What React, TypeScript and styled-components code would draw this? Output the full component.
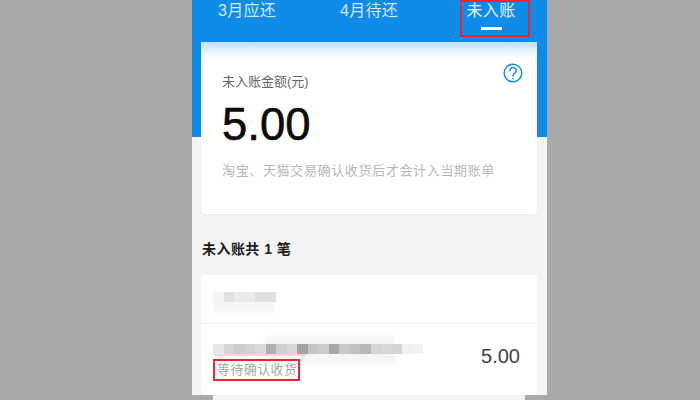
import styled, { createGlobalStyle } from "styled-components";

const GlobalStyle = createGlobalStyle`
  html, body {
    margin: 0;
    height: 100%;
    overflow: hidden;
    background: #aaaaaa;
  }
  body {
    font-family: "Liberation Sans", "Noto Sans CJK SC", sans-serif;
  }
`;

const Page = styled.div`
  width: 700px;
  height: 400px;
  overflow: hidden;
`;

const Phone = styled.div`
  width: 355px;
  height: 395px;
  margin-left: 192px;
  display: flex;
  flex-direction: column;
  background: linear-gradient(#0e8ce8 137px, #f4f4f4 137px);
`;

const BottomPeek = styled.div`
  width: 312px;
  height: 5px;
  margin-left: 213px;
  background: #f4f4f4;
`;

const Tabs = styled.div`
  display: grid;
  grid-template-columns: repeat(3, 122px);
  height: 42px;
  margin-left: -6px;
`;

const Tab = styled.div<{ $active?: boolean }>`
  position: relative;
  height: 36px;
  display: flex;
  flex-direction: column;
  align-items: center;
  font-size: 16px;
  line-height: 22px;
  letter-spacing: 0.3px;
  color: #d4eafb;

  ${(p) =>
    p.$active &&
    `
    color: #e8f4fd;
    &::after {
      content: "";
      position: absolute;
      left: 30px;
      top: 0;
      width: 70px;
      height: 37px;
      box-sizing: border-box;
      border: 2px solid #f0222c;
    }
  `}
`;

const Underline = styled.div`
  width: 21px;
  height: 3px;
  margin-top: 5px;
  background: #ffffff;
`;

const SummaryCard = styled.section`
  position: relative;
  width: 336px;
  height: 172px;
  box-sizing: border-box;
  margin-left: 9px;
  padding: 30px 21px 0;
  border-radius: 0 0 4px 4px;
  background: linear-gradient(#c4e0f7, #ffffff 16px);
  box-shadow: 0 1px 3px rgba(0, 0, 0, 0.04);
`;

const HelpIcon = styled.svg`
  position: absolute;
  top: 20px;
  right: 13px;
  width: 22px;
  height: 22px;
  fill: none;
  stroke: #1a8fe3;
  stroke-width: 1.7;
  stroke-linecap: round;
`;

const SummaryLabel = styled.div`
  font-size: 13px;
  line-height: 20px;
  color: #666666;
`;

const Amount = styled.div`
  margin-top: 5px;
  font-size: 45.5px;
  line-height: 56px;
  color: #0c0c0c;
  -webkit-text-stroke: 0.6px #0c0c0c;
`;

const Hint = styled.div`
  margin-top: 8px;
  font-size: 13px;
  line-height: 20px;
  letter-spacing: 0.65px;
  color: #b8b8b8;
  white-space: nowrap;
`;

const SectionTitle = styled.h2`
  margin: 25px 0 0 10px;
  height: 20px;
  font-size: 14px;
  line-height: 20px;
  font-weight: 700;
  letter-spacing: 0.45px;
  color: #1c1c1c;
`;

const ListCard = styled.section`
  width: 336px;
  height: 120px;
  margin: 16px 0 0 9px;
  border-radius: 4px;
  background: #ffffff;
  display: flex;
  flex-direction: column;
`;

const ShopRow = styled.div`
  height: 49px;
  box-sizing: border-box;
  padding: 17px 12px 0;
  border-bottom: 1px solid #efefef;
`;

const ItemRow = styled.div`
  flex: 1;
  display: flex;
  justify-content: space-between;
  padding: 20px 17px 0 12px;
`;

const ItemInfo = styled.div`
  display: flex;
  flex-direction: column;
  align-items: flex-start;
`;

const Mosaic = styled.div`
  position: relative;
  display: flex;
  height: 10px;
  filter: blur(0.4px);
`;

const MosaicCell = styled.i`
  display: block;
  width: 10.5px;
  height: 100%;
`;

const Smear = styled.div`
  position: absolute;
  background: #f6f6f6;
  border-radius: 3px;
  filter: blur(1.5px);
  z-index: -1;
`;

const ShopSmear = styled(Smear)`
  left: 0;
  top: 8px;
  width: 62px;
  height: 12px;
`;

const ItemSmear = styled(Smear)`
  left: 52px;
  top: -8px;
  width: 130px;
  height: 28px;
`;

const PinkStreak = styled.div`
  position: absolute;
  left: 1px;
  top: 10px;
  width: 92px;
  height: 2px;
  background: #fbd6d6;
  filter: blur(0.6px);
`;

const Status = styled.div`
  position: relative;
  z-index: 1;
  margin-top: 5px;
  width: 87px;
  height: 22px;
  box-sizing: border-box;
  border: 2px solid #f0222c;
  padding-left: 2px;
  font-size: 13px;
  line-height: 18px;
  letter-spacing: 0.4px;
  color: #a8a8a8;
  white-space: nowrap;
`;

const ItemAmount = styled.div`
  font-size: 20px;
  line-height: 24px;
  color: #444444;
`;

const shopCells = ["#f4f4f4", "#e2e2e2", "#ebebeb", "#ebebeb", "#e0e0e0", "#e0e0e0"];
const itemCells = [
  "#e8e8e8", "#d6d6d6", "#cdcdcd", "#d2d2d2", "#dadada", "#b0b0b0", "#cfcfcf",
  "#d8d8d8", "#a4a4a4", "#c4c4c4", "#cccccc", "#a8a8a8", "#c8c8c8", "#c0c0c0",
  "#b8b8b8", "#d4d4d4", "#d8d8d8", "#d4d4d4", "#f0f0f0", "#f2f2f2",
];

export default function App() {
  return (
    <Page>
      <GlobalStyle />
      <Phone>
        <Tabs>
          <Tab>3月应还</Tab>
          <Tab>4月待还</Tab>
          <Tab $active>
            未入账
            <Underline />
          </Tab>
        </Tabs>
        <SummaryCard>
          <HelpIcon viewBox="0 0 24 24">
            <circle cx="12" cy="12" r="9.6" />
            <path d="M8.6 9.4a3.4 3.4 0 1 1 5.4 2.8c-1.2.8-2 1.4-2 3" />
            <path d="M12 18.1v.1" />
          </HelpIcon>
          <SummaryLabel>未入账金额(元)</SummaryLabel>
          <Amount>5.00</Amount>
          <Hint>淘宝、天猫交易确认收货后才会计入当期账单</Hint>
        </SummaryCard>
        <SectionTitle>未入账共 1 笔</SectionTitle>
        <ListCard>
          <ShopRow>
            <Mosaic>
              <ShopSmear />
              {shopCells.map((c, i) => (
                <MosaicCell key={i} style={{ background: c }} />
              ))}
            </Mosaic>
          </ShopRow>
          <ItemRow>
            <ItemInfo>
              <Mosaic>
                <ItemSmear />
                {itemCells.map((c, i) => (
                  <MosaicCell key={i} style={{ background: c }} />
                ))}
                <PinkStreak />
              </Mosaic>
              <Status>等待确认收货</Status>
            </ItemInfo>
            <ItemAmount>5.00</ItemAmount>
          </ItemRow>
        </ListCard>
      </Phone>
      <BottomPeek />
    </Page>
  );
}
